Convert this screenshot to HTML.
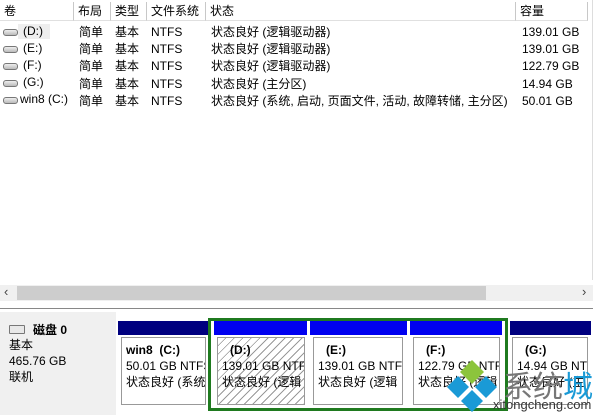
<html><head><style>
body{margin:0;width:600px;height:415px;overflow:hidden;background:#fff;font-family:"Liberation Sans","Noto Sans CJK SC",sans-serif;font-size:12px;color:#000;position:relative}
.a{position:absolute;white-space:nowrap}
.hd{position:absolute;top:2px;height:19px;border-right:1px solid #c8c8c8;line-height:19px;padding-left:4px;box-sizing:border-box;border-bottom:1px solid #e0e0e0}
.ic{position:absolute;width:13px;height:5px;border:1px solid #777;border-radius:3px;background:linear-gradient(#eee,#bbb)}
.bar{position:absolute;top:321px;height:14px}
.box{position:absolute;top:337px;height:68px;border:1px solid #999;box-sizing:border-box;background:#fff;overflow:hidden;white-space:nowrap;line-height:16px;padding:4px 0 0 4px;font-size:12px}
.box b{display:block;padding-left:8px}
</style></head><body>
<div class="hd" style="left:0;width:74px">卷</div>
<div class="hd" style="left:74px;width:37px">布局</div>
<div class="hd" style="left:111px;width:36px">类型</div>
<div class="hd" style="left:147px;width:59px">文件系统</div>
<div class="hd" style="left:206px;width:310px">状态</div>
<div class="hd" style="left:516px;width:72px">容量</div>
<div class="a" style="left:592px;top:0;width:1px;height:280px;background:#ddd"></div>

<div class="a" style="left:18px;top:24px;width:32px;height:15px;background:#eee"></div>
<div class="ic" style="left:3px;top:29px"></div><div class="a" style="left:23px;top:24px">(D:)</div>
<div class="ic" style="left:3px;top:46px"></div><div class="a" style="left:23px;top:41px">(E:)</div>
<div class="ic" style="left:3px;top:63px"></div><div class="a" style="left:23px;top:58px">(F:)</div>
<div class="ic" style="left:3px;top:80px"></div><div class="a" style="left:23px;top:75px">(G:)</div>
<div class="ic" style="left:3px;top:97px"></div><div class="a" style="left:20px;top:92px">win8 (C:)</div>

<div class="a" style="left:79px;top:24px;line-height:17.2px">简单<br>简单<br>简单<br>简单<br>简单</div>
<div class="a" style="left:115px;top:24px;line-height:17.2px">基本<br>基本<br>基本<br>基本<br>基本</div>
<div class="a" style="left:151px;top:24px;line-height:17.2px">NTFS<br>NTFS<br>NTFS<br>NTFS<br>NTFS</div>
<div class="a" style="left:211px;top:24px;line-height:17.2px">状态良好 (逻辑驱动器)<br>状态良好 (逻辑驱动器)<br>状态良好 (逻辑驱动器)<br>状态良好 (主分区)<br>状态良好 (系统, 启动, 页面文件, 活动, 故障转储, 主分区)</div>
<div class="a" style="left:522px;top:24px;line-height:17.2px">139.01 GB<br>139.01 GB<br>122.79 GB<br>14.94 GB<br>50.01 GB</div>

<div class="a" style="left:0;top:285px;width:593px;height:16px;background:#f0f0f0"></div>
<div class="a" style="left:17px;top:286px;width:469px;height:14px;background:#cdcdcd"></div>
<div class="a" style="left:4px;top:284px;font-size:13px;color:#444">‹</div>
<div class="a" style="left:582px;top:284px;font-size:13px;color:#444">›</div>
<div class="a" style="left:0;top:308px;width:593px;height:1px;background:#888"></div>
<div class="a" style="left:0;top:312px;width:116px;height:103px;background:#f0f0f0"></div>
<div class="ic" style="left:9px;top:325px;width:14px;height:7px;border-radius:1px;background:#e8e8e8"></div>
<div class="a" style="left:33px;top:321px;font-weight:bold">磁盘 0</div>
<div class="a" style="left:9px;top:337px;line-height:16px">基本<br>465.76 GB<br>联机</div>

<div class="bar" style="left:118px;width:90px;background:#00007f"></div>
<div class="bar" style="left:214px;width:93px;background:#0000f0"></div>
<div class="bar" style="left:310px;width:97px;background:#0000f0"></div>
<div class="bar" style="left:410px;width:92px;background:#0000f0"></div>
<div class="bar" style="left:510px;width:81px;background:#00007f"></div>
<div class="a" style="left:208px;top:318px;width:300px;height:93px;border:3px solid #1f7a1f;box-sizing:border-box"></div>

<div class="box" style="left:121px;width:85px"><b style="padding-left:0">win8&nbsp; (C:)</b>50.01 GB NTFS<br>状态良好 (系统</div>
<div class="box" style="left:217px;width:88px;background:repeating-linear-gradient(135deg,#fff 0 5px,#999 5px 6px)"><b>(D:)</b>139.01 GB NTFS<br>状态良好 (逻辑</div>
<div class="box" style="left:313px;width:90px"><b>(E:)</b>139.01 GB NTFS<br>状态良好 (逻辑</div>
<div class="box" style="left:413px;width:87px"><b>(F:)</b>122.79 GB NTFS<br>状态良好 (逻辑</div>
<div class="box" style="left:512px;width:76px"><b>(G:)</b>14.94 GB NTFS<br>状态良好 (主</div>

<svg class="a" style="left:445px;top:358px" width="55" height="55" viewBox="0 0 55 55">
<polygon points="27,2 39,14 27,26 15,14" fill="#8cc43c"/>
<polygon points="13,18 24,29 13,40 2,29" fill="#1a9ad6"/>
<polygon points="41,18 52,29 41,40 30,29" fill="#1a9ad6"/>
<polygon points="27,32 38,43 27,54 16,43" fill="#1a9ad6"/>
</svg>
<div class="a" style="left:503px;top:362px;font-size:30px;color:#777;font-family:'Noto Sans CJK SC',sans-serif">系统<span style="color:#1a9ad6">城</span></div>
<div class="a" style="left:493px;top:397px;font-size:13px;color:#333">xitongcheng.com</div>
</body></html>
